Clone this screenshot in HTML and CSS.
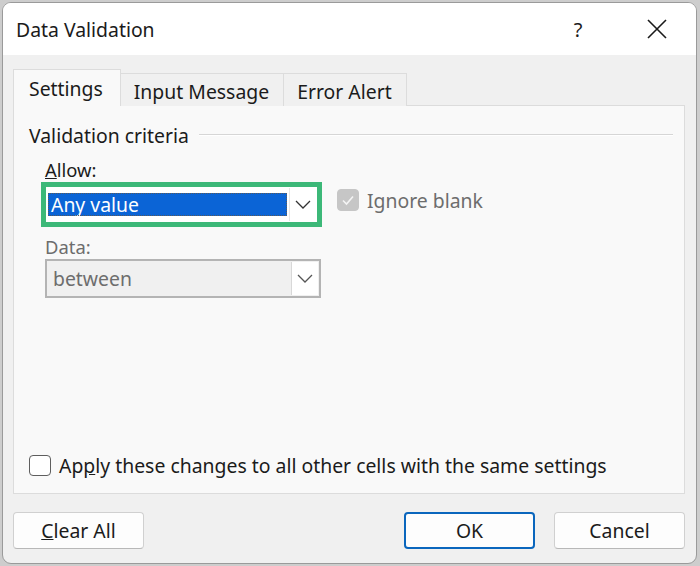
FILE: index.html
```html
<!DOCTYPE html>
<html>
<head>
<meta charset="utf-8">
<link rel="stylesheet" href="styles.css">
</head>
<body>
<div class="window">
  <div class="titlebar">
    <span class="title">Data Validation</span>
    <span class="help">?</span>
    <span class="close"><svg width="20" height="20" viewBox="0 0 20 20"><path d="M1 1 L19 19 M19 1 L1 19" stroke="#1a1a1a" stroke-width="1.6" fill="none"/></svg></span>
  </div>
  <div class="content">
    <div class="tabs">
      <div class="tab active">Settings</div>
      <div class="tab">Input Message</div>
      <div class="tab">Error Alert</div>
    </div>
    <div class="panel">
      <div class="group-head"><span class="legend">Validation criteria</span><span class="rule"></span></div>
      <div class="field-label"><u>A</u>llow:</div>
      <div class="row">
        <div class="focus-ring">
          <div class="combo">
            <div class="combo-value selected">Any value</div>
            <div class="combo-btn"><svg width="16" height="9" viewBox="0 0 16 9"><path d="M1 1 L8 8 L15 1" stroke="#333" stroke-width="1.3" fill="none"/></svg></div>
          </div>
        </div>
        <div class="check-wrap disabled">
          <span class="box checked"><svg width="14" height="12" viewBox="0 0 14 12"><path d="M2 6.5 L5.5 10 L12 2.5" stroke="#f4f4f4" stroke-width="1.6" fill="none"/></svg></span>
          <span class="check-text">Ignore blank</span>
        </div>
      </div>
      <div class="field-label dim">Data:</div>
      <div class="combo disabled-combo">
        <div class="combo-value">between</div>
        <div class="combo-btn"><svg width="16" height="9" viewBox="0 0 16 9"><path d="M1 1 L8 8 L15 1" stroke="#555" stroke-width="1.3" fill="none"/></svg></div>
      </div>
      <div class="spacer"></div>
      <div class="check-wrap apply">
        <span class="box"></span>
        <span class="check-text">Ap<u>p</u>ly these changes to all other cells with the same settings</span>
      </div>
    </div>
    <div class="buttons">
      <button class="btn"><u>C</u>lear All</button>
      <span class="grow"></span>
      <button class="btn primary">OK</button>
      <button class="btn">Cancel</button>
    </div>
  </div>
</div>
</body>
</html>
```

FILE: styles.css
```css
* { box-sizing: border-box; }
html, body { margin: 0; padding: 0; }
body {
  width: 700px;
  height: 566px;
  background: #cdcdcd;
  font-family: "Noto Sans", "Open Sans", sans-serif;
  color: #1b1b1b;
  overflow: hidden;
  padding: 2px 3px 2px 2px;
}
.window {
  width: 695px;
  height: 562px;
  background: #f0f0f0;
  border: 1px solid #9a9a9a;
  border-radius: 9px;
  overflow: hidden;
  display: flex;
  flex-direction: column;
}
.titlebar {
  height: 52px;
  background: #ffffff;
  display: flex;
  align-items: center;
  padding-left: 13px;
  flex: none;
}
.title {
  font-size: 19.4px;
  flex: 1;
}
.help {
  font-size: 20px;
  width: 20px;
  text-align: center;
  margin-right: 59px;
}
.close {
  display: flex;
  margin-right: 29px;
}
.content {
  flex: 1;
  display: flex;
  flex-direction: column;
  padding: 14px 11px 13px 10px;
}
.tabs {
  display: flex;
  align-items: flex-end;
  height: 37px;
  position: relative;
  z-index: 1;
  margin-bottom: -1px;
}
.tab {
  font-size: 19.4px;
  height: 33px;
  padding: 2px 14px 0 13px;
  display: flex;
  align-items: center;
  background: #f0f0f0;
  border: 1px solid #dcdcdc;
  border-bottom: none;
  margin-left: -1px;
}
.tab.active {
  height: 37px;
  background: #f9f9f9;
  margin-left: 0;
  padding: 0 17px 0 15px;
}
.tab.active + .tab {
  margin-left: 0;
  border-left: none;
}
.panel {
  height: 389px;
  background: #f9f9f9;
  border: 1px solid #dcdcdc;
  display: flex;
  flex-direction: column;
  padding: 17px 11px 14px 14px;
}
.group-head {
  display: flex;
  align-items: center;
  height: 24px;
  margin-left: 1px;
}
.legend {
  font-size: 19.4px;
  margin-right: 10px;
}
.rule {
  flex: 1;
  height: 2px;
  border-top: 1px solid #d6d6d6;
  border-bottom: 1px solid #ffffff;
}
.field-label {
  font-size: 18.4px;
  margin: 11px 0 0 17px;
  height: 24px;
  line-height: 24px;
}
.field-label.dim {
  color: #6d6d6d;
  margin-top: 8px;
}
.row {
  display: flex;
  align-items: center;
}
.focus-ring {
  margin-left: 13px;
  width: 281px;
  height: 45px;
  border: 5px solid #3cb878;
  background: #fff;
  display: flex;
  padding: 1px;
}
.combo {
  display: flex;
  height: 100%;
  width: 100%;
}
.combo-value {
  flex: 1;
  font-size: 19.4px;
  display: flex;
  align-items: center;
  padding-left: 3px;
}
.combo-value.selected {
  background: #0b64d6;
  color: #fff;
  margin: 5px 2px 5px 1px;
  outline: 1px dotted #5a5a5a;
  outline-offset: -1px;
}
.combo-btn {
  width: 27px;
  display: flex;
  align-items: center;
  justify-content: center;
  background: #fff;
  border-left: 1px solid #e6e6e6;
}
.disabled-combo {
  margin: 0 0 0 17px;
  width: 276px;
  height: 39px;
  border: 2px solid #b4b4b4;
  background: #f0f0f0;
  color: #6d6d6d;
  padding: 1px;
}
.disabled-combo .combo-value {
  padding-left: 5px;
}
.disabled-combo .combo-btn {
  border-left: 1px solid #d8d8d8;
}
.check-wrap {
  display: flex;
  align-items: center;
}
.check-wrap.disabled {
  margin-left: 15px;
  margin-top: -9px;
}
.box {
  width: 22px;
  height: 22px;
  border-radius: 4px;
  border: 1.5px solid #5e5e5e;
  background: #fff;
  display: flex;
  align-items: center;
  justify-content: center;
  flex: none;
}
.box.checked {
  background: #c6c6c6;
  border-color: #c6c6c6;
}
.check-text {
  font-size: 19.4px;
  margin-left: 8px;
}
.disabled .check-text {
  color: #6d6d6d;
}
.spacer { flex: 1; }
.apply {
  margin-left: 1px;
}
.apply .box {
  width: 22px;
  height: 21px;
}
.buttons {
  display: flex;
  margin-top: 18px;
  gap: 19px;
}
.grow { flex: 1; }
.btn {
  font-family: "Noto Sans", "Open Sans", sans-serif;
  font-size: 19.4px;
  color: #1b1b1b;
  width: 131px;
  height: 37px;
  background: #fdfdfd;
  border: 1px solid #d0d0d0;
  border-bottom-color: #b8b8b8;
  border-radius: 4px;
  padding: 0;
}
.btn.primary {
  border: 2px solid #0a66bd;
}
```
